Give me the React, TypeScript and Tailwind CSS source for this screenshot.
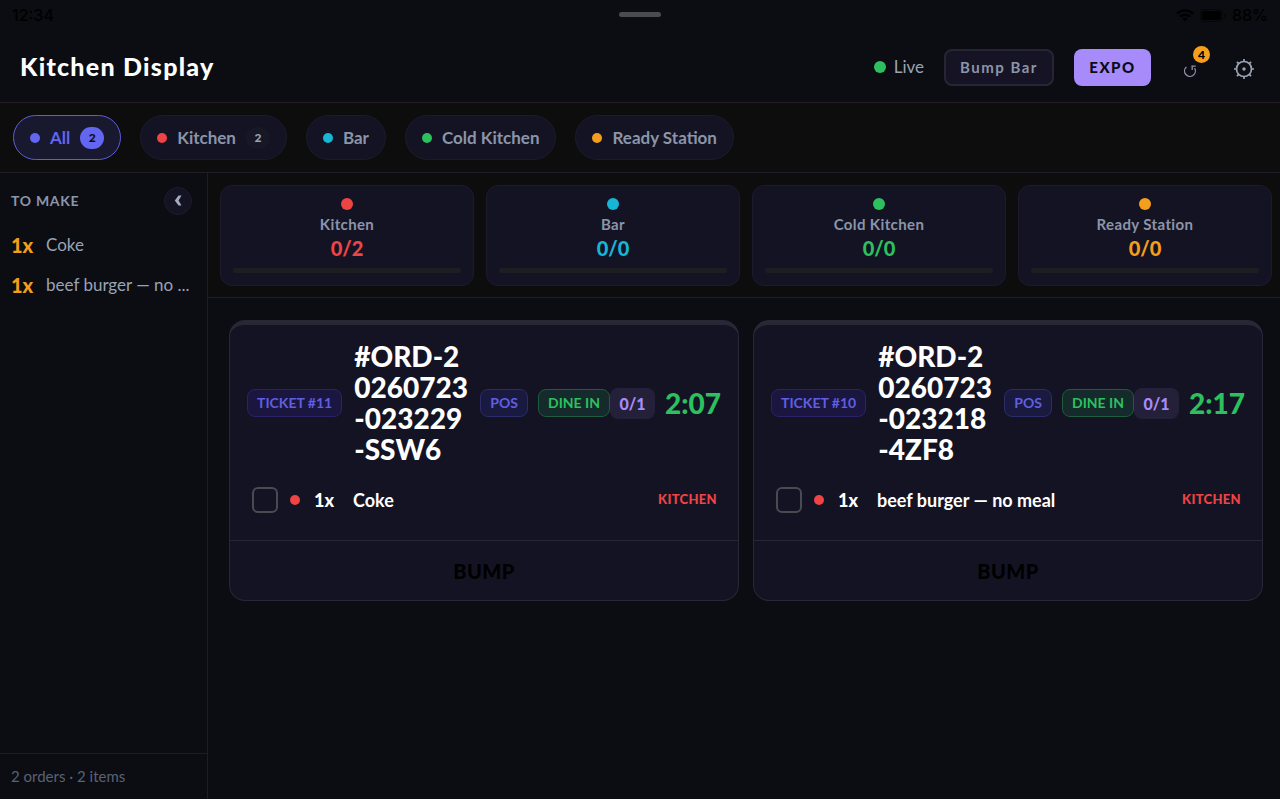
import React from 'react';
import { useState } from 'react';

const stations = [
  { name: 'Kitchen', count: '0/2', badge: 2, dot: 'bg-[#ef4444]', text: 'text-[#ef4444]' },
  { name: 'Bar', count: '0/0', badge: 0, dot: 'bg-[#17b5d6]', text: 'text-[#17b5d6]' },
  { name: 'Cold Kitchen', count: '0/0', badge: 0, dot: 'bg-[#2cc05f]', text: 'text-[#2cc05f]' },
  { name: 'Ready Station', count: '0/0', badge: 0, dot: 'bg-[#f59e1b]', text: 'text-[#f59e1b]' },
];

const tickets = [
  { id: 11, order: '#ORD-20260723-023229-SSW6', time: '2:07', item: 'Coke' },
  { id: 10, order: '#ORD-20260723-023218-4ZF8', time: '2:17', item: 'beef burger — no meal' },
];

// names are already shortened for the narrow column
const toMake = ['Coke', 'beef burger — no ...'];

function StatusBar() {
  return (
    <div className="grid grid-cols-3 items-center h-8 px-3 pb-0.5 text-base text-black font-['Inter',sans-serif]">
      <span className="font-medium">12:34</span>
      <div className="justify-self-center w-[42px] h-[5px] mb-0.5 rounded-full bg-[#4a4b50]" />
      <div className="flex items-center justify-end gap-1.5">
        <svg width="18" height="13" viewBox="0 0 18 13" fill="none" stroke="currentColor" strokeWidth="2.4">
          <path d="M1 4.6a11.6 11.6 0 0 1 16 0M4 7.7a7.2 7.2 0 0 1 10 0" />
          <path d="M9 12.6 6.2 9.8a4 4 0 0 1 5.6 0z" fill="currentColor" stroke="none" />
        </svg>
        <svg width="26" height="13" viewBox="0 0 26 13">
          <rect x="0.5" y="0.5" width="22" height="12" rx="3.5" fill="none" stroke="#050608" />
          <rect x="2" y="2" width="19" height="9" rx="2" fill="currentColor" />
          <path d="M24 4.5v4c1-.3 1.5-1 1.5-2s-.5-1.7-1.5-2z" fill="#050608" />
        </svg>
        <span className="font-medium">88%</span>
      </div>
    </div>
  );
}

function Header() {
  return (
    <header className="flex items-center justify-between h-[71px] pl-5 pr-[25px] border-b border-[#241c27]">
      <h1 className="text-[25px] font-black tracking-wider text-white">Kitchen Display</h1>
      <div className="flex items-center">
        <span className="w-3 h-3 rounded-full bg-[#2cc05f]" />
        <span className="ml-2 text-[17px] text-[#9aa3b5]">Live</span>
        <button className="ml-5 w-[110px] h-[37px] rounded-lg border-2 border-[#262535] bg-[#151324] text-[15px] font-bold tracking-widest text-[#8b95a9]">
          Bump Bar
        </button>
        <button className="ml-5 w-[77px] h-[37px] rounded-lg bg-[#a78bfa] text-[15px] font-black tracking-widest text-[#0b0b14]">
          EXPO
        </button>
        <button aria-label="Recall" className="relative ml-8 pt-2 text-[#8b93a5]">
          <svg width="14" height="14" viewBox="0 0 14 14" fill="none" stroke="currentColor" strokeWidth="1.3">
            <path d="M3.4 2.9A5.400 5.400 0 1 0 11.600 4.200" />
            <path d="M8.400 2.100h4.300M9.200 2.100v4" />
          </svg>
          <span className="absolute -top-2.5 left-2.5 w-[17px] h-[17px] rounded-full bg-[#f5a01d] text-xs leading-[17px] font-black text-black">
            4
          </span>
        </button>
        <button aria-label="Settings" className="ml-9 pt-1 text-[#9aa3b5]">
          <svg width="22" height="22" viewBox="0 0 22 22" fill="none" stroke="currentColor" strokeWidth="1.7">
            <circle cx="11" cy="11" r="7.5" />
            <circle cx="11" cy="11" r="1.7" fill="currentColor" stroke="none" />
            <path d="M11 1v2.5M11 18.500V21M1 11h2.500M18.500 11H21M3.900 3.900l1.800 1.800M16.300 16.300l1.800 1.800M3.900 18.100l1.800-1.800M16.300 5.700l1.800-1.800" />
          </svg>
        </button>
      </div>
    </header>
  );
}

function Tabs() {
  const [active, setActive] = useState('All');
  return (
    <nav className="flex items-center gap-[19px] h-[70px] px-[13px] border-b border-[#1f1f27] bg-[#0d0d0e] text-[17px] font-bold">
      <button
        onClick={() => setActive('All')}
        className={`flex items-center h-[45px] px-4 rounded-full border ${active === 'All' ? 'border-[#5d5ddb] bg-[#18182e] text-[#6366f1]' : 'border-[#1d1b2b] bg-[#141323] text-[#8b95a9]'}`}
      >
        <span className="w-2.5 h-2.5 rounded-full bg-[#6366f1]" />
        <span className="ml-2.5">All</span>
        <span className="ml-2.5 w-6 h-[22px] rounded-full bg-[#6366f1] text-xs leading-[22px] font-black text-[#0b0b14]">2</span>
      </button>
      {stations.map((s) => (
        <button
          key={s.name}
          onClick={() => setActive(s.name)}
          className={`flex items-center h-[45px] px-4 rounded-full border bg-[#141323] text-[#8b95a9] ${active === s.name ? 'border-[#5d5ddb]' : 'border-[#1d1b2b]'}`}
        >
          <span className={`w-2.5 h-2.5 rounded-full ${s.dot}`} />
          <span className="ml-2.5">{s.name}</span>
          {s.badge > 0 && (
            <span className="ml-2.5 w-6 h-[22px] rounded-full bg-[#181726] text-xs leading-[22px] font-black text-[#9aa3b5]">{s.badge}</span>
          )}
        </button>
      ))}
    </nav>
  );
}

function Sidebar() {
  return (
    <aside className="flex flex-col shrink-0 w-[208px] border-r border-[#1d1d24]">
      <div className="flex items-center justify-between pt-3.5 pb-2.5 pl-[11px] pr-[15px]">
        <h2 className="text-sm font-bold tracking-wider text-[#8b95a9]">TO MAKE</h2>
        <button aria-label="Collapse" className="flex items-center justify-center w-7 h-7 rounded-full border border-[#1d1b2b] bg-[#141323] text-[#a3abbc]">
          <svg width="8" height="12" viewBox="0 0 8 12" fill="currentColor">
            <path d="M4.500.500h3L4.600 5.500l2.900 5h-3L.800 5.500z" />
          </svg>
        </button>
      </div>
      <ul className="flex-1">
        {toMake.map((name) => (
          <li key={name} className="flex items-center h-10 pl-[11px] whitespace-nowrap">
            <span className="shrink-0 w-[35px] text-xl font-black text-[#f59e1b]">1x</span>
            <span className="text-[17px] text-[#9aa3b5]">{name}</span>
          </li>
        ))}
      </ul>
      <div className="flex items-center h-[46px] pl-[11px] border-t border-[#1d1d24] text-[15px] text-[#5a6273]">
        2 orders · 2 items
      </div>
    </aside>
  );
}

function Stations() {
  return (
    <section className="grid grid-cols-4 gap-3 pt-3 pb-[11px] pl-3 pr-2 border-b border-[#1f1f2b] bg-[#0d0d0e]">
      {stations.map((s) => (
        <div key={s.name} className="flex flex-col items-center h-[101px] pt-3 px-3 rounded-xl border border-[#1d1b2b] bg-[#141323]">
          <span className={`w-3 h-3 rounded-full ${s.dot}`} />
          <span className="mt-1 text-[15px] leading-5 font-bold tracking-wide text-[#8b95a9]">{s.name}</span>
          <span className={`text-xl leading-7 font-black ${s.text}`}>{s.count}</span>
          <div className="w-full h-[5px] mt-1.5 rounded-full bg-[#1d1d22]" />
        </div>
      ))}
    </section>
  );
}

function Ticket({ id, order, time, item }: { id: number; order: string; time: string; item: string }) {
  return (
    <article className="rounded-2xl border border-t-[5px] border-[#282736] bg-[#141323]">
      <div className="flex items-center pt-4 px-[17px] text-sm whitespace-nowrap">
        <span className="px-[9px] h-7 leading-[26px] rounded-lg border border-[#2a2368] bg-[#1a1640] font-bold text-[#5f5fe0]">
          TICKET #{id}
        </span>
        <h3 className="flex-1 ml-3 mr-2.5 text-[28px] leading-[31px] font-black text-white whitespace-normal break-all">{order}</h3>
        <span className="px-[9px] h-7 leading-[26px] rounded-lg border border-[#2b2c68] bg-[#1a1a40] font-bold text-[#5f5fe0]">
          POS
        </span>
        <span className="ml-2.5 px-[9px] h-7 leading-[26px] rounded-lg border border-[#1d5c3c] bg-[#152a2a] font-bold text-[#2cc05f]">
          DINE IN
        </span>
        <span className="w-[45px] h-[31px] leading-[31px] rounded-lg bg-[#252039] text-base text-center font-black text-[#a78bfa]">
          0/1
        </span>
        <span className="ml-2.5 text-[28px] leading-[31px] font-black text-[#2cc05f]">{time}</span>
      </div>
      <label className="flex items-center h-[75px] pb-1.5 pl-[22px] pr-[21px] text-lg font-bold text-white">
        <input type="checkbox" className="appearance-none w-[26px] h-[26px] rounded-md border-2 border-[#4a4a52] checked:bg-[#6366f1]" />
        <span className="ml-3 w-2.5 h-2.5 rounded-full bg-[#ef4444]" />
        <span className="ml-3.5 w-[39px] font-black">1x</span>
        <span className="flex-1">{item}</span>
        <span className="text-[13px] font-black tracking-wide text-[#ef4444]">KITCHEN</span>
      </label>
      <button className="w-full h-[60px] border-t border-[#282736] text-xl font-black tracking-wide text-black">BUMP</button>
    </article>
  );
}

export default function App() {
  return (
    <div className="flex flex-col min-h-screen bg-[#0b0d13] font-['Lato',sans-serif]">
      <StatusBar />
      <Header />
      <Tabs />
      <div className="flex flex-1">
        <Sidebar />
        <main className="flex-1 min-w-0">
          <Stations />
          <div className="grid grid-cols-2 gap-3.5 pt-[22px] pl-[21px] pr-[17px]">
            {tickets.map((t) => (
              <Ticket key={t.id} {...t} />
            ))}
          </div>
        </main>
      </div>
    </div>
  );
}
